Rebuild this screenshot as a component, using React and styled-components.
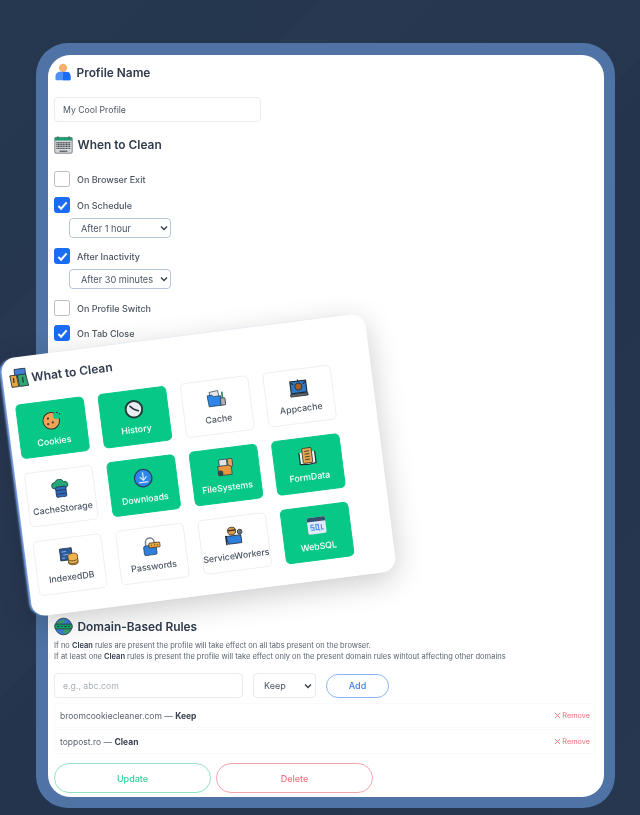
import * as React from 'react';
import styled, { createGlobalStyle } from 'styled-components';

const chevron =
  "url(\"data:image/svg+xml,%3Csvg xmlns='http://www.w3.org/2000/svg' width='8' height='6' viewBox='0 0 8 6'%3E%3Cpath d='M1 1.500l3 3 3-3' fill='none' stroke='%23333b46' stroke-width='1.300'/%3E%3C/svg%3E\")";

const GlobalStyle = createGlobalStyle`
  html, body {
    margin: 0;
    padding: 0;
    background: #25364f;
  }
  * {
    box-sizing: border-box;
  }
`;

const Page = styled.div`
  position: relative;
  width: 640px;
  height: 815px;
  padding: 43px 25px 7px 36px;
  overflow: hidden;
  font-family: Inter, 'Liberation Sans', sans-serif;
  color: #2f3a4b;
  filter: blur(0.4px);
  background:
    linear-gradient(135deg, transparent 0 22%, rgba(255, 255, 255, 0.012) 22% 48%, transparent 48%),
    linear-gradient(135deg, #263750 0%, #24344d 60%, #26374f 100%);
`;

const Frame = styled.div`
  height: 765px;
  padding: 12px 11px 11px 12px;
  border-radius: 32px;
  background: #4e73a4;
`;

const Sheet = styled.div`
  height: 742px;
  padding: 6px 6px 0;
  border-radius: 22px;
  background: #fff;
`;

const Heading = styled.h2`
  display: flex;
  align-items: center;
  gap: 4.5px;
  margin: ${(p) => p.$top || 0}px 0 0;
  height: 22px;
  font-size: 11.9px;
  font-weight: 600;
  color: #2f3a4b;
`;

const IconSlot = styled.span`
  display: flex;
  flex: 0 0 18px;
  justify-content: center;
`;

const TextInput = styled.input`
  display: block;
  width: ${(p) => p.$width};
  height: 25px;
  margin-top: ${(p) => p.$top || 0}px;
  padding: 0 8px;
  border: 1px solid #e9ebee;
  border-radius: 4px;
  font: 400 8.7px Inter, sans-serif;
  color: #4b5563;
  background: #fff;

  &::placeholder {
    color: #a9afb8;
  }
`;

const WhenList = styled.div`
  display: flex;
  flex-direction: column;
  margin-top: 16px;
`;

const CheckRow = styled.label`
  display: flex;
  align-items: center;
  gap: 7px;
  height: 16px;
  margin-top: ${(p) => p.$gap}px;
  font-size: 9px;
  font-weight: 500;
  color: #4b5563;
`;

const Box = styled.span`
  display: flex;
  align-items: center;
  justify-content: center;
  width: 16px;
  height: 16px;
  border-radius: 2.5px;
  border: 1.5px solid ${(p) => (p.$on ? '#1a6cf5' : '#b9bcc2')};
  background: ${(p) => (p.$on ? '#1a6cf5' : '#fff')};
`;

const Delay = styled.select`
  display: block;
  width: 102px;
  height: 20px;
  margin: 5px 0 0 15px;
  padding: 0 0 0 11px;
  border: 1.5px solid #b7c5da;
  border-radius: 4px;
  font: 400 9.2px Inter, sans-serif;
  color: #4b5563;
  appearance: none;
  background: #fff ${chevron} no-repeat right 2px center;
`;

const DomainSection = styled.section`
  margin-top: 274px;
`;

const Help = styled.p`
  margin: ${(p) => p.$top || 0}px 0 0;
  font-size: 7.5px;
  line-height: 11px;
  color: #59626f;
  white-space: nowrap;

  b {
    font-weight: 600;
    color: #2f3a4b;
  }
`;

const AddRow = styled.div`
  display: flex;
  align-items: center;
  gap: 10px;
  margin-top: 11px;
`;

const KeepSelect = styled.select`
  width: 63px;
  height: 25px;
  padding: 0 0 0 10px;
  border: 1px solid #e9ebee;
  border-radius: 4px;
  font: 400 9px Inter, sans-serif;
  color: #4b5563;
  appearance: none;
  background: #fff ${chevron} no-repeat right 3px center;
`;

const Pill = styled.button`
  height: ${(p) => p.$height}px;
  width: ${(p) => p.$width}px;
  padding: 0;
  border: 1.5px solid ${(p) => p.$line};
  border-radius: 15px;
  background: #fff;
  color: ${(p) => p.$ink};
  font: 500 9px Inter, sans-serif;
`;

const RuleList = styled.div`
  display: flex;
  flex-direction: column;
  gap: 1px;
  margin: 5px 3px 0 0;
`;

const Rule = styled.div`
  display: flex;
  align-items: center;
  justify-content: space-between;
  height: 25px;
  padding: 0 4px 0 5px;
  border: 1px solid #fafafa;
  border-radius: 3px;
  font-size: 8.5px;
  color: #59626f;

  b {
    font-weight: 700;
    color: #39424f;
  }
`;

const Remove = styled.span`
  display: flex;
  align-items: center;
  gap: 1px;
  font-size: 7.3px;
  color: #ee6f7c;
`;

const Actions = styled.div`
  display: flex;
  gap: 5px;
  margin-top: 9px;
`;

const FloatingCard = styled.div`
  position: absolute;
  left: 15px;
  top: 335px;
  width: 367px;
  height: 260px;
  padding: 10px 38px 18px 9px;
  border-radius: 14px;
  background: #fff;
  transform: rotate(-7.3deg);
  box-shadow: -3px 0 2px -1px #7ea6ea, 0 8px 30px rgba(0, 0, 0, 0.2);
`;

const CardTitle = styled.h2`
  display: flex;
  align-items: center;
  gap: 3px;
  margin: 0 0 15px -3px;
  height: 22px;
  font-size: 12px;
  font-weight: 600;
  color: #2f3a4b;
`;

const TileGrid = styled.div`
  display: grid;
  grid-template-columns: repeat(4, 69px);
  grid-auto-rows: 55px;
  gap: 14px;
`;

const Tile = styled.div`
  display: flex;
  flex-direction: column;
  align-items: center;
  justify-content: center;
  gap: 5px;
  border-radius: 5px;
  font-size: 8.8px;
  font-weight: 500;
  color: ${(p) => (p.$on ? '#fff' : '#4b5563')};
  background: ${(p) => (p.$on ? '#07c887' : '#fff')};
  border: 1px solid ${(p) => (p.$on ? '#07c887' : '#eeeff1')};
  white-space: nowrap;
`;

const Glyph = ({ size = 19, children }) => (
  <svg width={size} height={size} viewBox="0 0 24 24" aria-hidden="true">
    {children}
  </svg>
);

const PersonIcon = () => (
  <Glyph size={18}>
    <circle cx="12" cy="6.500" r="5.500" fill="#f6b26b" />
    <path d="M2 22v-4c0-4 3-6.500 6-6.500h8c3 0 6 2.500 6 6.500v4a1 1 0 0 1-1 1H3a1 1 0 0 1-1-1z" fill="#4d8ff2" />
    <path d="M12 12h6c2.500 0 4 2.500 4 6v4a1 1 0 0 1-1 1h-9z" fill="#1a6cf5" />
  </Glyph>
);

const CalendarIcon = () => (
  <Glyph size={19}>
    <rect x="1" y="3" width="22" height="20" rx="1.500" fill="#d5d7da" stroke="#6b7076" />
    <rect x="1" y="3" width="22" height="4" fill="#1e9c72" />
    <path d="M5 1.500v3M19 1.500v3" stroke="#3b4148" />
    <path d="M3 9.500h18M3 12h18M3 14.500h18M3 17h18" stroke="#4f555c" strokeWidth="1.600" strokeDasharray="1.500 .5" />
    <path d="M7 20.500h10" stroke="#4f555c" strokeWidth="1.500" />
  </Glyph>
);

const GlobeIcon = () => (
  <Glyph size={19}>
    <circle cx="12" cy="12" r="10.500" fill="#3d7dd8" stroke="#2a3640" />
    <path d="M3 8c3-3 7-5 11-5l-1 4-5 2zM12 14l9-3 1 3-4 6-6 1z" fill="#3aa66b" />
    <rect x="1" y="9" width="22" height="6" rx="1" fill="#17a86f" stroke="#1f2b36" strokeWidth=".8" />
    <path d="M4 12h3M9 12h2M13 12h3M18 12h2" stroke="#12332a" />
  </Glyph>
);

const KitIcon = () => (
  <Glyph size={20}>
    <rect x="8" y="1" width="13" height="10" fill="#3f7fd6" stroke="#26323f" />
    <path d="M2 8h8l1 14H3z" fill="#e8a63e" stroke="#26323f" />
    <path d="M11 8h10l2 14H12z" fill="#35a672" stroke="#26323f" />
    <path d="M6 11v6M17 11v7" stroke="#26323f" strokeWidth="1.500" />
  </Glyph>
);

const CookieIcon = () => (
  <Glyph size={21}>
    <circle cx="11.500" cy="13" r="9.500" fill="#eda456" stroke="#3a3230" strokeWidth="1.200" />
    <circle cx="8" cy="10" r="1.300" fill="#5a3a2a" />
    <circle cx="13" cy="15" r="1.300" fill="#5a3a2a" />
    <circle cx="7.500" cy="16.500" r="1.300" fill="#5a3a2a" />
    <circle cx="18" cy="8" r="3.800" fill="#07c887" />
    <path d="M18 4l2 1M21.500 7l1-1" stroke="#3a3230" strokeWidth="1.200" />
  </Glyph>
);

const ClockIcon = () => (
  <Glyph>
    <circle cx="12" cy="12" r="10.500" fill="#e8edf2" stroke="#213f38" strokeWidth="2.500" />
    <path d="M12 12L7 7M12 12l6 3" stroke="#28323c" strokeWidth="2" />
  </Glyph>
);

const CacheIcon = () => (
  <Glyph>
    <path d="M4 3l11-1 1 9H5z" fill="#e5e7ea" stroke="#46505c" />
    <path d="M1 7h6l2 2h9v12H2z" fill="#2f86e8" stroke="#28425f" />
    <rect x="17" y="12" width="6" height="9" rx="1" fill="#aab0b6" stroke="#2c343c" />
    <rect x="19" y="4" width="2" height="8" fill="#2f7f5f" />
  </Glyph>
);

const AppcacheIcon = () => (
  <Glyph>
    <rect x="2" y="3" width="20" height="15" fill="#2e79c9" stroke="#222b35" strokeWidth="1.500" />
    <circle cx="12" cy="10" r="4.500" fill="#a35f2a" stroke="#222b35" />
    <path d="M1 19h22v3H1z" fill="#636b73" stroke="#222b35" />
    <path d="M12 1v3M3 5l3 2M21 5l-3 2" stroke="#222b35" strokeWidth="1.500" />
  </Glyph>
);

const StorageIcon = () => (
  <Glyph>
    <path d="M5 12a4 4 0 0 1 1-8 6 6 0 0 1 11 0 4 4 0 0 1 2 8z" fill="#23a678" stroke="#1e4a42" />
    <rect x="6" y="10" width="13" height="13" rx="1.500" fill="#3268b8" stroke="#1f3353" />
    <path d="M6 14.500h13M6 19h13" stroke="#1f3353" />
  </Glyph>
);

const DownloadIcon = () => (
  <Glyph size={20}>
    <circle cx="12" cy="12" r="10.500" fill="#2f86e8" stroke="#25405e" strokeWidth="1.500" />
    <path d="M12 5v9M8 10.500l4 4 4-4M6.500 17h11" fill="none" stroke="#d9e8fb" strokeWidth="1.500" />
  </Glyph>
);

const FileSystemIcon = () => (
  <Glyph>
    <rect x="5" y="2" width="10" height="9" fill="#dfe3e7" stroke="#39434e" />
    <rect x="16" y="2" width="6" height="10" rx="1" fill="#eda456" stroke="#39434e" />
    <path d="M3 10h14l3 2v10H3z" fill="#e8963a" stroke="#39434e" />
    <circle cx="5.500" cy="19" r="3.500" fill="#39434e" />
  </Glyph>
);

const FormDataIcon = () => (
  <Glyph>
    <path d="M2 6v15l10 1 10-1V6" fill="#f4f5f6" stroke="#21282f" strokeWidth="1.500" />
    <rect x="6" y="1" width="12" height="19" rx="1" fill="#e2a655" stroke="#3a3228" />
    <path d="M9 5h6M9 8.500h6M9 12h6M9 15.500h6" stroke="#5b4227" strokeWidth="1.300" />
  </Glyph>
);

const IndexedIcon = () => (
  <Glyph>
    <rect x="1" y="1" width="15" height="15" fill="#2a5a9c" stroke="#1e2d44" />
    <path d="M3 5h6M5 9h8M3 13h4" stroke="#9ec2ee" />
    <ellipse cx="16.500" cy="11" rx="6" ry="2.800" fill="#eeb34f" stroke="#5a4423" />
    <path d="M10.500 11v9c0 1.600 2.600 2.800 6 2.800s6-1.200 6-2.800v-9" fill="#eeb34f" stroke="#5a4423" />
    <path d="M10.500 15c0 1.500 2.600 2.800 6 2.800s6-1.300 6-2.800M10.500 18.500c0 1.500 2.600 2.800 6 2.800s6-1.300 6-2.800" fill="none" stroke="#5a4423" />
  </Glyph>
);

const PasswordIcon = () => (
  <Glyph>
    <path d="M5 11V7a5.500 5.500 0 0 1 11 0v4" fill="none" stroke="#7a828b" strokeWidth="1.800" />
    <rect x="2" y="11" width="16" height="12" rx="2" fill="#2f7fdc" stroke="#27405f" />
    <rect x="9" y="8" width="14" height="6" rx="1" fill="#eaa63f" stroke="#4b3a1e" />
    <path d="M12 11h1M15.500 11h1M19 11h1" stroke="#38290f" strokeWidth="1.500" />
  </Glyph>
);

const WorkersIcon = () => (
  <Glyph>
    <circle cx="10" cy="6" r="5" fill="#d99a4a" stroke="#2e2a26" />
    <path d="M5 5h10" stroke="#2e2a26" strokeWidth="1.500" />
    <circle cx="20" cy="8" r="3" fill="#6b737b" stroke="#2e2a26" />
    <path d="M2 12h19v10H4z" fill="#2f7fdc" stroke="#1f2c3c" />
    <path d="M2 11v12" stroke="#1f2c3c" strokeWidth="2" />
  </Glyph>
);

const SqlIcon = () => (
  <Glyph size={20}>
    <rect x="1" y="2" width="22" height="20" rx="2" fill="#dfeafa" />
    <path d="M1 7V4a2 2 0 0 1 2-2h18a2 2 0 0 1 2 2v3z" fill="#35506f" />
    <path d="M5 11h3.500M5 11v3h3.500v3H5M11 11h3v6h-3zM14 17l1.500 1.500M17.500 11v6H20" fill="none" stroke="#4d8ff2" strokeWidth="1.300" />
  </Glyph>
);

const Tick = () => (
  <svg width="11" height="11" viewBox="0 0 12 12" aria-hidden="true">
    <path d="M1.500 6.500L4.500 9.500L10.500 2.500" fill="none" stroke="#fff" strokeWidth="2.200" />
  </svg>
);

const Cross = () => (
  <svg width="7" height="7" viewBox="0 0 8 8" aria-hidden="true">
    <path d="M1 1l6 6M7 1L1 7" stroke="#ee6f7c" strokeWidth="1" />
  </svg>
);

const tiles = [
  { name: 'Cookies', on: true, icon: <CookieIcon /> },
  { name: 'History', on: true, icon: <ClockIcon /> },
  { name: 'Cache', icon: <CacheIcon /> },
  { name: 'Appcache', icon: <AppcacheIcon /> },
  { name: 'CacheStorage', icon: <StorageIcon /> },
  { name: 'Downloads', on: true, icon: <DownloadIcon /> },
  { name: 'FileSystems', on: true, icon: <FileSystemIcon /> },
  { name: 'FormData', on: true, icon: <FormDataIcon /> },
  { name: 'IndexedDB', icon: <IndexedIcon /> },
  { name: 'Passwords', icon: <PasswordIcon /> },
  { name: 'ServiceWorkers', icon: <WorkersIcon /> },
  { name: 'WebSQL', on: true, icon: <SqlIcon /> },
];

const Check = ({ on, gap, children }) => (
  <CheckRow $gap={gap}>
    <Box $on={on}>{on && <Tick />}</Box>
    {children}
  </CheckRow>
);

const App = () => (
  <Page>
    <GlobalStyle />
    <Frame>
      <Sheet>
        <Heading>
          <IconSlot>
            <PersonIcon />
          </IconSlot>
          Profile Name
        </Heading>
        <TextInput $width="207px" $top={14} defaultValue="My Cool Profile" />
        <Heading $top={11}>
          <IconSlot>
            <CalendarIcon />
          </IconSlot>
          When to Clean
        </Heading>
        <WhenList>
          <Check gap={0}>On Browser Exit</Check>
          <Check on gap={10}>
            On Schedule
          </Check>
          <Delay defaultValue="After 1 hour">
            <option>After 1 hour</option>
          </Delay>
          <Check on gap={10}>
            After Inactivity
          </Check>
          <Delay defaultValue="After 30 minutes">
            <option>After 30 minutes</option>
          </Delay>
          <Check gap={11}>On Profile Switch</Check>
          <Check on gap={9}>
            On Tab Close
          </Check>
        </WhenList>
        <DomainSection>
          <Heading>
            <IconSlot>
              <GlobeIcon />
            </IconSlot>
            Domain-Based Rules
          </Heading>
          <Help $top={3}>
            If no <b>Clean</b> rules are present the profile will take effect on
            all tabs present on the browser.
          </Help>
          <Help>
            If at least one <b>Clean</b> rules is present the profile will take
            effect only on the present domain rules wihtout affecting other
            domains
          </Help>
          <AddRow>
            <TextInput $width="189px" placeholder="e.g., abc.com" />
            <KeepSelect defaultValue="Keep">
              <option>Keep</option>
              <option>Clean</option>
            </KeepSelect>
            <Pill $width={63} $height={24} $line="#8db4f8" $ink="#3b7df0">
              Add
            </Pill>
          </AddRow>
          <RuleList>
            <Rule>
              <span>
                broomcookiecleaner.com — <b>Keep</b>
              </span>
              <Remove>
                <Cross /> Remove
              </Remove>
            </Rule>
            <Rule>
              <span>
                toppost.ro — <b>Clean</b>
              </span>
              <Remove>
                <Cross /> Remove
              </Remove>
            </Rule>
          </RuleList>
          <Actions>
            <Pill $width={157} $height={30} $line="#8fe3c4" $ink="#2fd09a">
              Update
            </Pill>
            <Pill $width={157} $height={30} $line="#f5a3ab" $ink="#f0717f">
              Delete
            </Pill>
          </Actions>
        </DomainSection>
      </Sheet>
    </Frame>
    <FloatingCard>
      <CardTitle>
        <KitIcon />
        What to Clean
      </CardTitle>
      <TileGrid>
        {tiles.map((tile) => (
          <Tile key={tile.name} $on={tile.on}>
            {tile.icon}
            {tile.name}
          </Tile>
        ))}
      </TileGrid>
    </FloatingCard>
  </Page>
);

export default App;
